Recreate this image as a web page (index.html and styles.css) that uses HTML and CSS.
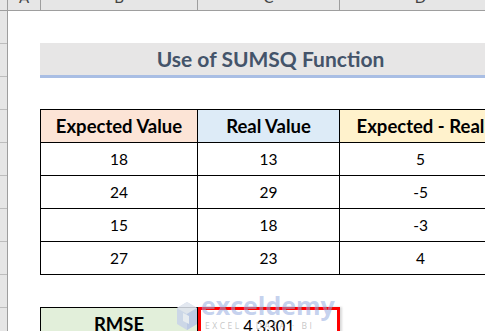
FILE: index.html
```html
<!DOCTYPE html>
<html>
<head>
<meta charset="utf-8">
<link rel="stylesheet" href="styles.css">
</head>
<body>
<div class="sheet">
  <div class="colheads">
    <div class="corner"></div>
    <div class="colhead col-a"><span>A</span></div>
    <div class="colhead col-b"><span>B</span></div>
    <div class="colhead col-c"><span>C</span></div>
    <div class="colhead col-d"><span>D</span></div>
  </div>
  <div class="main">
    <div class="rowheads">
      <div class="rowhead"></div><div class="rowhead"></div><div class="rowhead"></div>
      <div class="rowhead"></div><div class="rowhead"></div><div class="rowhead"></div>
      <div class="rowhead"></div><div class="rowhead"></div><div class="rowhead"></div>
      <div class="rowhead"></div>
    </div>
    <div class="content">
      <div class="title">Use of SUMSQ Function</div>
      <div class="grid data">
        <div class="cell th th-exp">Expected Value</div>
        <div class="cell th th-real">Real Value</div>
        <div class="cell th th-diff">Expected - Real</div>
        <div class="cell">18</div><div class="cell">13</div><div class="cell">5</div>
        <div class="cell">24</div><div class="cell">29</div><div class="cell">-5</div>
        <div class="cell">15</div><div class="cell">18</div><div class="cell">-3</div>
        <div class="cell">27</div><div class="cell">23</div><div class="cell">4</div>
      </div>
      <div class="grid result">
        <div class="cell th th-rmse">RMSE</div>
        <div class="cell value">4.3301</div>
      </div>
    </div>
  </div>
</div>
<div class="watermark">
  <svg class="wm-icon" width="20" height="28" viewBox="0 0 20 28">
    <polygon points="10,0 20,6 20,22 10,28 0,22 0,6" fill="#c9d3ea"/>
    <polygon points="10,0 20,6 10,12 0,6" fill="#dfe4ee"/>
    <polygon points="10,12 20,6 20,22 10,28" fill="#b6c4e6"/>
    <polygon points="6,11 12,14 12,22 6,19" fill="#e8ecf4"/>
  </svg>
  <div class="wm-text">
    <div class="wm-name">exceldemy</div>
    <div class="wm-sub">EXCEL · DATA · BI</div>
  </div>
</div>
</body>
</html>
```
FILE: styles.css
```css
html, body {
  margin: 0;
  padding: 0;
}
body {
  width: 485px;
  height: 331px;
  overflow: hidden;
  background: #ffffff;
  position: relative;
  font-family: Lato, "Open Sans", sans-serif;
  color: #000;
}
.sheet {
  display: flex;
  flex-direction: column;
}
.colheads {
  display: flex;
  height: 10px;
  background: #e6e6e6;
  border-bottom: 1px solid #9e9e9e;
  overflow: hidden;
}
.corner {
  width: 7px;
  flex: none;
  border-right: 1px solid #9e9e9e;
}
.colhead {
  flex: none;
  text-align: center;
  border-right: 1px solid #9e9e9e;
  color: #444;
  font-size: 15px;
  line-height: 15px;
}
.colhead span {
  display: block;
  margin-top: -10px;
}
.col-a { width: 32px; }
.col-b { width: 156px; }
.col-c { width: 141px; }
.col-d { width: 161px; border-right: none; }

.main {
  display: flex;
}
.rowheads {
  width: 7px;
  flex: none;
  background: #e6e6e6;
  border-right: 1px solid #9e9e9e;
}
.rowhead {
  height: 32px;
  border-bottom: 1px solid #bdbdbd;
}
.content {
  padding-left: 32px;
}
.title {
  width: 461px;
  margin-top: 32px;
  height: 32px;
  background: #e7e6e6;
  border-bottom: 3px solid #a9bee4;
  color: #44546a;
  font-weight: bold;
  font-size: 21px;
  line-height: 32px;
  text-align: center;
}
.grid {
  display: grid;
  gap: 1px;
  background: #000;
  border: 1px solid #000;
  grid-auto-rows: 32px;
}
.data {
  margin-top: 31px;
  grid-template-columns: 156px 141px 161px;
}
.result {
  margin-top: 32px;
  grid-template-columns: 156px 141px;
  width: 298px;
  border-right: none;
}
.cell {
  background: #fff;
  display: flex;
  align-items: center;
  justify-content: center;
  font-size: 15.5px;
  white-space: nowrap;
}
.th {
  font-weight: bold;
  font-size: 18.5px;
}
.th-exp { background: #fce4d6; }
.th-real { background: #ddebf7; }
.th-diff { background: #fff2cc; }
.th-rmse { background: #e2efda; }
.value {
  border: 3px solid #ff0000;
  margin: -1px -1px 0 0;
  box-shadow: 2px 0 2px rgba(0,0,0,0.15);
  font-size: 16.5px;
  padding-top: 6px;
}
.watermark {
  position: absolute;
  left: 177px;
  top: 302px;
  display: flex;
  gap: 4px;
  opacity: 0.85;
}
.wm-text {
  display: flex;
  flex-direction: column;
}
.wm-name {
  font-family: "Open Sans", sans-serif;
  font-weight: bold;
  font-size: 25px;
  line-height: 16px;
  margin-top: -5px;
  color: rgba(150, 172, 226, 0.65);
}
.wm-sub {
  font-family: "Open Sans", sans-serif;
  font-size: 8.5px;
  letter-spacing: 2.5px;
  color: rgba(160, 160, 160, 0.7);
  margin-top: 7px;
  margin-left: 4px;
}
```
